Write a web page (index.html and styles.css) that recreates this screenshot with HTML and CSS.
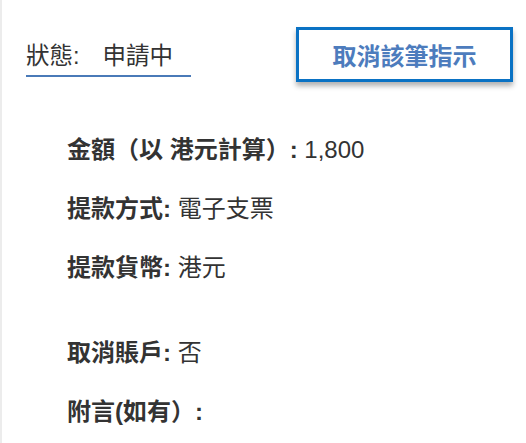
FILE: index.html
```html
<!DOCTYPE html>
<html lang="zh-Hant">
<head>
<meta charset="utf-8">
<link rel="stylesheet" href="styles.css">
</head>
<body>
<div class="page">
  <div class="top">
    <div class="status">
      <span class="status-label">狀態:</span><span class="status-value">申請中</span>
    </div>
    <button class="cancel" type="button">取消該筆指示</button>
  </div>
  <div class="details">
    <div class="row"><span class="label">金額（以 港元計算）:</span> 1,800</div>
    <div class="row"><span class="label">提款方式:</span> 電子支票</div>
    <div class="row"><span class="label">提款貨幣:</span> 港元</div>
    <div class="row row-spaced"><span class="label">取消賬戶:</span> 否</div>
    <div class="row"><span class="label">附言(如有）:</span></div>
  </div>
</div>
</body>
</html>
```
FILE: styles.css
```css
html, body {
  margin: 0;
  padding: 0;
  background: #ffffff;
}
body {
  font-family: "Liberation Sans", "Noto Sans CJK TC", sans-serif;
  color: #333333;
}
.page {
  min-height: 443px;
  box-sizing: border-box;
  border-left: 2px solid #ececec;
}
.top {
  display: flex;
  justify-content: space-between;
  align-items: flex-start;
  padding: 27px 13px 0 24px;
}
.status {
  margin-top: 14px;
  width: 165px;
  font-size: 23.5px;
  line-height: 30px;
  padding-bottom: 4px;
  border-bottom: 2px solid #4a7ab8;
  white-space: nowrap;
}
.status-value {
  margin-left: 23px;
}
.cancel {
  width: 217px;
  height: 55px;
  box-sizing: border-box;
  background: #ffffff;
  border: 3px solid #0a72c4;
  font-family: "Liberation Sans", "Noto Sans CJK TC", sans-serif;
  font-size: 24px;
  font-weight: bold;
  color: #4d7cbd;
  padding: 0;
  box-shadow: 0 4px 5px rgba(0, 0, 0, 0.3);
  cursor: pointer;
}
.details {
  display: flex;
  flex-direction: column;
  gap: 29px;
  padding-left: 65px;
  margin-top: 53px;
}
.row {
  font-size: 24px;
  line-height: 30px;
  white-space: nowrap;
}
.row-spaced {
  margin-top: 26px;
}
.label {
  font-weight: bold;
}
```
